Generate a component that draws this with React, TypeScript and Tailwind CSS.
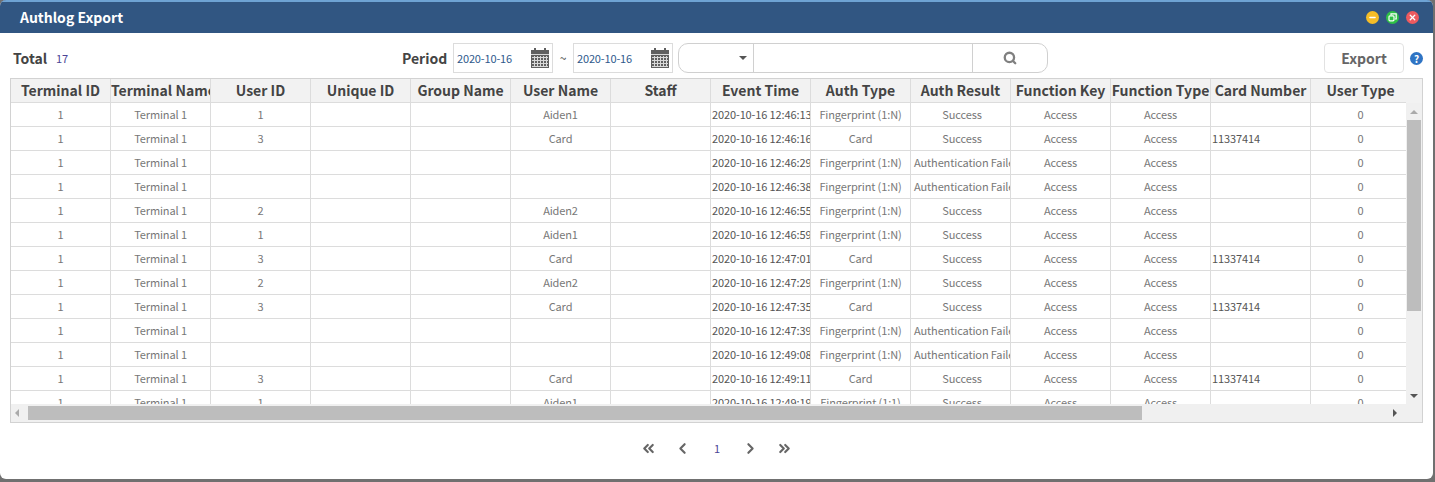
import { Search, ChevronLeft, ChevronRight, ChevronsLeft, ChevronsRight, Minus, X } from "lucide-react";

const cols = [
  "Terminal ID", "Terminal Name", "User ID", "Unique ID", "Group Name", "User Name", "Staff",
  "Event Time", "Auth Type", "Auth Result", "Function Key", "Function Type", "Card Number", "User Type",
];

const FP = "Fingerprint (1:N)";
const FAIL = "Authentication Failed";

// uid, name, time, auth type, result, card
const rows: [string, string, string, string, string, string][] = [
  ["1", "Aiden1", "12:46:13", FP, "Success", ""],
  ["3", "Card", "12:46:16", "Card", "Success", "11337414"],
  ["", "", "12:46:29", FP, FAIL, ""],
  ["", "", "12:46:38", FP, FAIL, ""],
  ["2", "Aiden2", "12:46:55", FP, "Success", ""],
  ["1", "Aiden1", "12:46:59", FP, "Success", ""],
  ["3", "Card", "12:47:01", "Card", "Success", "11337414"],
  ["2", "Aiden2", "12:47:29", FP, "Success", ""],
  ["3", "Card", "12:47:35", "Card", "Success", "11337414"],
  ["", "", "12:47:39", FP, FAIL, ""],
  ["", "", "12:49:08", FP, FAIL, ""],
  ["3", "Card", "12:49:11", "Card", "Success", "11337414"],
  ["1", "Aiden1", "12:49:19", "Fingerprint (1:1)", "Success", ""],
];

function CalendarIcon() {
  return (
    <svg width="18" height="20" viewBox="0 0 18 20" fill="#5f5f5f">
      <rect x="3" y="0" width="2" height="4" />
      <rect x="13" y="0" width="2" height="4" />
      <path d="M0 2h18v18H0z" />
      <g fill="#d8d8d8">
        <rect x="0" y="6" width="18" height="1" />
        {[9, 12, 15, 18].map((y) => (
          <rect key={y} x="1" y={y} width="16" height="1" />
        ))}
        {[3, 6, 9, 12, 15].map((x) => (
          <rect key={x} x={x} y="8" width="1" height="11" />
        ))}
      </g>
    </svg>
  );
}

function DateBox() {
  return (
    <div className="w-[100px] h-[30px] border border-[#dcdcdc] flex items-center justify-between pl-[3px] pr-[3px]">
      <span className="text-[11px] tracking-[-0.15px] text-[#2f5a8c]">2020-10-16</span>
      <CalendarIcon />
    </div>
  );
}

function Cell({ text, left, pad, dark }: { text: string; left?: boolean; pad?: boolean; dark?: boolean }) {
  return (
    <div
      className={
        "w-[100px] shrink-0 h-[24px] border-r border-b border-[#dcdcdc] text-[11px] tracking-[-0.12px] leading-[23px] whitespace-nowrap overflow-hidden " +
        (dark ? "text-[#555] " : "text-[#777] ") +
        (left ? "text-left pl-px" : "text-center") +
        (pad ? " pl-[3px]" : "")
      }
    >
      {text}
    </div>
  );
}

export default function App() {
  return (
    <div className="w-[1435px] h-[482px] bg-[#707070] overflow-hidden font-['Noto_Sans_CJK_KR','Noto_Sans',sans-serif]">
      <div className="w-[1433px] h-[479px] bg-white rounded-[6px] overflow-hidden flex flex-col">
        <div className="h-[33px] shrink-0 bg-[#315682] border-t-2 border-[#6ea3d4] flex items-center justify-between pl-[20px] pr-[14px]">
          <span className="text-white text-[14px] font-bold leading-[28px] mt-[-2px]">Authlog Export</span>
          <div className="flex gap-[7px]">
            <span className="w-[13px] h-[13px] rounded-full bg-[#f5bd27] flex items-center justify-center">
              <Minus size={9} color="#fff" strokeWidth={3.5} />
            </span>
            <span className="w-[13px] h-[13px] rounded-full bg-[#2fc146] flex items-center justify-center">
              <svg width="9" height="9" viewBox="0 0 9 9" fill="none" stroke="#fff" strokeWidth="1.2">
                <path d="M3 2V.8h5.2V6H7" />
                <rect x="1" y="2.8" width="5" height="5" rx="1" />
              </svg>
            </span>
            <span className="w-[13px] h-[13px] rounded-full bg-[#ee5a5f] flex items-center justify-center">
              <X size={9} color="#fff" strokeWidth={3.5} />
            </span>
          </div>
        </div>

        <div className="h-[45px] shrink-0 flex items-center pl-[13px] pt-[5px]">
          <span className="text-[14px] font-bold text-[#444] w-[43px]">Total</span>
          <span className="text-[11px] text-[#4b4596] w-[346px]">17</span>
          <span className="text-[14px] font-bold text-[#444] w-[51px]">Period</span>
          <DateBox />
          <span className="w-[20px] text-center text-[12px] text-[#444]">~</span>
          <DateBox />
          <div className="ml-[5px] w-[370px] h-[30px] border border-[#d0d0d0] rounded-[10px] flex overflow-hidden">
            <div className="w-[75px] border-r border-[#d0d0d0] flex items-center justify-end pr-[6px]">
              <span className="w-0 h-0 border-x-[4px] border-x-transparent border-t-[4px] border-t-[#555]" />
            </div>
            <div className="w-[219px] border-r border-[#d0d0d0]" />
            <div className="flex-1 flex items-center justify-center">
              <Search size={14} color="#808080" strokeWidth={4} />
            </div>
          </div>
          <button className="ml-[276px] w-[80px] h-[30px] border border-[#e2e2e2] rounded-[4px] text-[14px] font-bold text-[#666]">
            Export
          </button>
          <span className="ml-[6px] w-[13px] h-[13px] rounded-full bg-[#2f74c4] text-white text-[10px] font-bold flex items-center justify-center">
            ?
          </span>
        </div>

        <div className="ml-[10px] w-[1413px] h-[345px] border border-[#d2d2d2] shrink-0 flex flex-col overflow-hidden">
          <div className="flex h-[325px] shrink-0">
            <div className="w-[1395px] shrink-0 overflow-hidden">
              <div className="flex h-[24px] bg-[#f2f2f2]">
                {cols.map((c) => (
                  <div
                    key={c}
                    className="w-[100px] shrink-0 border-r border-b border-[#dcdcdc] text-[14px] leading-[23px] font-bold text-[#444] text-center whitespace-nowrap overflow-hidden"
                  >
                    {c}
                  </div>
                ))}
              </div>
              {rows.map((r, i) => (
                <div key={i} className="flex">
                  <Cell text="1" />
                  <Cell text="Terminal 1" />
                  <Cell text={r[0]} />
                  <Cell text="" />
                  <Cell text="" />
                  <Cell text={r[1]} />
                  <Cell text="" />
                  <Cell text={"2020-10-16 " + r[2]} left dark />
                  <Cell text={r[3]} />
                  <Cell text={r[4]} pad />
                  <Cell text="Access" />
                  <Cell text="Access" />
                  <Cell text={r[5]} left dark />
                  <Cell text="0" />
                </div>
              ))}
            </div>
            <div className="flex-1 bg-[#f0f0f0] flex flex-col items-center">
              <div className="h-[24px] w-full shrink-0 bg-[#f2f2f2]" />
              <div className="h-[17px] flex items-center shrink-0">
                <span className="w-0 h-0 border-x-[4px] border-x-transparent border-b-[4px] border-b-[#aaa]" />
              </div>
              <div className="w-[14px] h-[191px] bg-[#bdbdbd] shrink-0" />
              <div className="flex-1 w-full flex items-end justify-center pb-[6px]">
                <span className="w-0 h-0 border-x-[4px] border-x-transparent border-t-[4px] border-t-[#555]" />
              </div>
            </div>
          </div>
          <div className="h-[18px] bg-[#f0f0f0] flex items-center pl-[4px] pr-[25px]">
            <span className="w-0 h-0 border-y-[4px] border-y-transparent border-r-[4px] border-r-[#aaa]" />
            <div className="ml-[9px] w-[1114px] h-[14px] bg-[#bdbdbd]" />
            <span className="ml-auto w-0 h-0 border-y-[4px] border-y-transparent border-l-[4px] border-l-[#555]" />
          </div>
        </div>

        <div className="flex-1 flex items-center justify-center pb-[6px] text-[#666]">
          <ChevronsLeft size={17} strokeWidth={3} />
          <ChevronLeft size={17} strokeWidth={3} className="ml-[17px]" />
          <span className="w-[51px] text-center text-[11px] pl-px text-[#4b4596]">1</span>
          <ChevronRight size={17} strokeWidth={3} />
          <ChevronsRight size={17} strokeWidth={3} className="ml-[17px]" />
        </div>
      </div>
    </div>
  );
}
